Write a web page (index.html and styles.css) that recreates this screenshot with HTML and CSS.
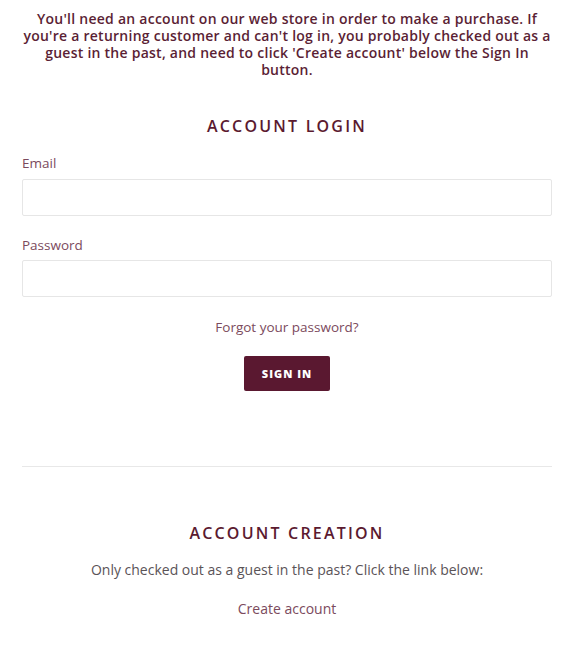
FILE: index.html
```html
<!DOCTYPE html>
<html lang="en">
<head>
<meta charset="utf-8">
<link rel="stylesheet" href="styles.css">
</head>
<body>
<main class="page">
  <p class="notice">You'll need an account on our web store in order to make a purchase. If<br>you're a returning customer and can't log in, you probably checked out as a<br>guest in the past, and need to click 'Create account' below the Sign In<br>button.</p>

  <section class="login">
    <h2 class="title">Account Login</h2>
    <form class="form">
      <label class="label" for="email">Email</label>
      <input class="input" id="email" type="email">
      <label class="label label-pw" for="password">Password</label>
      <input class="input" id="password" type="password">
      <p class="forgot"><a href="#">Forgot your password?</a></p>
      <div class="actions"><button type="button" class="btn">Sign In</button></div>
    </form>
  </section>

  <hr class="divider">

  <section class="create">
    <h2 class="title">Account Creation</h2>
    <p class="text">Only checked out as a guest in the past? Click the link below:</p>
    <p class="link"><a href="#">Create account</a></p>
  </section>
</main>
</body>
</html>
```
FILE: styles.css
```css
* { box-sizing: border-box; }
html, body { margin: 0; padding: 0; background: #fff; }
body {
  font-family: "Open Sans", "Liberation Sans", sans-serif;
  color: #555;
}
.page { padding: 0 22px; }
.notice {
  margin: 0 -14px;
  padding: 10px 0 0;
  text-align: center;
  font-size: 14px;
  line-height: 17px;
  font-weight: 600;
  letter-spacing: 0.25px;
  color: #5b1f35;
}
.title {
  margin: 0;
  text-align: center;
  font-size: 16px;
  font-weight: 600;
  letter-spacing: 2.2px;
  text-transform: uppercase;
  color: #5b1a30;
}
.login .title { margin-top: 38px; line-height: 20px; }
.form { display: flex; flex-direction: column; margin-top: 19px; }
.label {
  font-size: 13.5px;
  line-height: 16px;
  color: #7b4a5d;
  margin-bottom: 8px;
}
.label-pw { margin-bottom: 7px; }
.input {
  height: 37px;
  border: 1px solid #e6e6e6;
  border-radius: 2px;
  margin: 0 0 21px;
  font: inherit;
}
.input:last-of-type { margin-bottom: 0; }
.forgot {
  margin: 0;
  padding-top: 22px;
  text-align: center;
  font-size: 13.5px;
  line-height: 16px;
}
.forgot a, .link a { color: #7b4a5d; text-decoration: none; }
.actions { display: flex; justify-content: center; margin-top: 21px; }
.btn {
  width: 86px;
  height: 35px;
  border: 0;
  border-radius: 2px;
  background: #5a1830;
  color: #fff;
  font-family: inherit;
  font-size: 11px;
  font-weight: 800;
  letter-spacing: 1px;
  text-transform: uppercase;
}
.divider {
  margin: 75px 0 0;
  border: 0;
  border-top: 1px solid #e8e8e8;
}
.create .title { margin-top: 56px; line-height: 20px; }
.text {
  margin: 19px 0 0;
  text-align: center;
  font-size: 14px;
  line-height: 16px;
  color: #5a5357;
}
.link {
  margin: 23px 0 0;
  text-align: center;
  font-size: 14px;
  line-height: 16px;
}
```
